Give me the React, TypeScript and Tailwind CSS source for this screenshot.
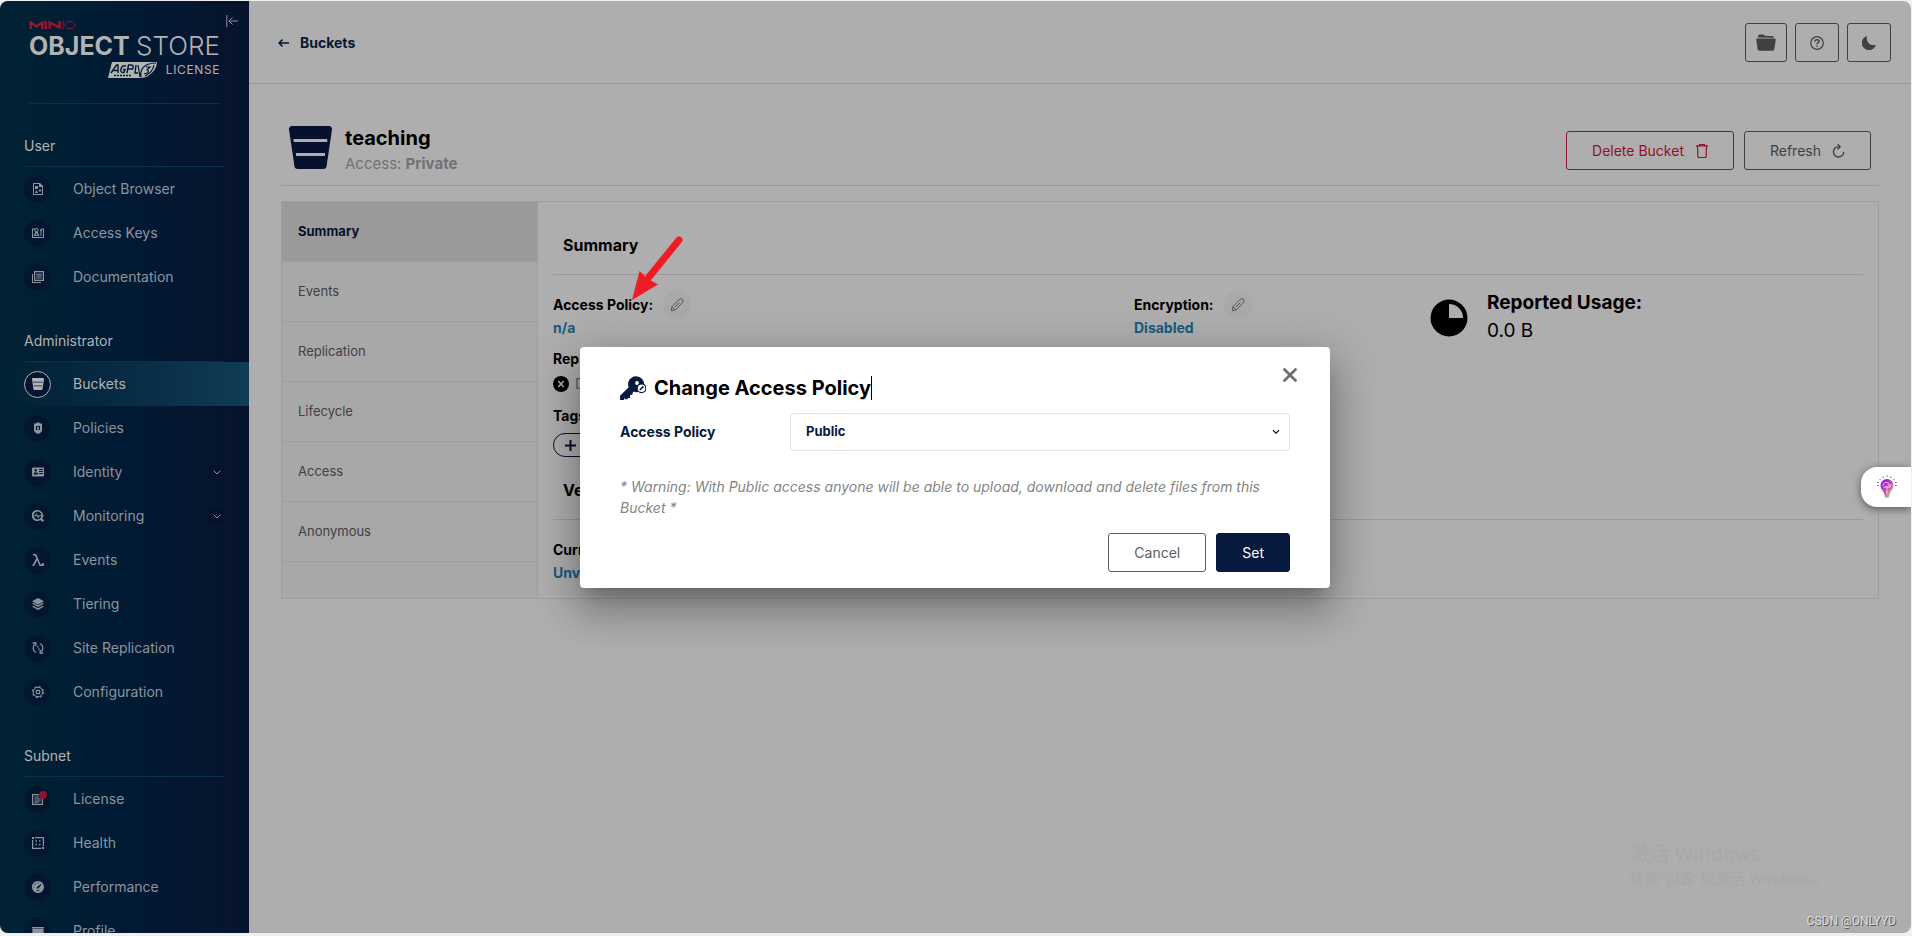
import { useState } from 'react';
import type { ReactNode } from 'react';

interface NavItem {
  label: string;
  icon: ReactNode;
  expandable?: boolean;
  badge?: boolean;
}

interface NavGroup {
  title: string;
  items: NavItem[];
}

function Glyph({ children }: { children: ReactNode }) {
  return (
    <svg viewBox="0 0 12 12" className="h-3 w-3" fill="currentColor" aria-hidden="true">
      {children}
    </svg>
  );
}

function BucketShape({ className }: { className: string }) {
  return (
    <svg viewBox="0 0 43 43" className={className} fill="currentColor" aria-hidden="true">
      <path
        fillRule="evenodd"
        d="M3 0h37a3 3 0 0 1 3 3.4L37.6 40a3.4 3.4 0 0 1-3.3 3H8.700a3.400 3.400 0 0 1-3.300-3L0 3.400A3 3 0 0 1 3 0ZM4.600 13v3h33.600v-3ZM7 27v3h29v-3Z"
      />
    </svg>
  );
}

const navGroups: NavGroup[] = [
  {
    title: 'User',
    items: [
      {
        label: 'Object Browser',
        icon: (
          <Glyph>
            <path fillRule="evenodd" d="M1 0h7l3 3v9H1ZM2 1v10h8V4H7V1Z" />
            <path d="M3 3h3v3H3ZM8 6l1.500 1.500L8 9 6.500 7.500ZM4.500 7 6 10H3Z" />
          </Glyph>
        ),
      },
      {
        label: 'Access Keys',
        icon: (
          <Glyph>
            <path fillRule="evenodd" d="M0 1.500h3v1H1V10h10V2.500H9v-1h3V11H0Z" />
            <path fillRule="evenodd" d="M4.500 1a2.200 2.200 0 0 1 1.200 4L7.500 9h-6l1.800-4a2.200 2.200 0 0 1 1.200-4Zm0 1a1.100 1.100 0 1 0 .1 0ZM4.500 6 3.300 8.200h2.400Z" />
            <path d="M8 2.500h2v2H8ZM8 5.500h2v1H8ZM8 7.500h2v1H8Z" />
          </Glyph>
        ),
      },
      {
        label: 'Documentation',
        icon: (
          <Glyph>
            <path fillRule="evenodd" d="M2 0h10v10H2ZM3.200 1.200v7.600h7.600V1.200Z" />
            <path d="M0 3h1v8h8v1H0ZM4.200 2.700h5.600v1H4.200ZM4.200 4.600h5.600v1H4.200ZM4.200 6.500h5.600v1H4.200Z" />
          </Glyph>
        ),
      },
    ],
  },
  {
    title: 'Administrator',
    items: [
      { label: 'Buckets', icon: <BucketShape className="h-3 w-3" /> },
      {
        label: 'Policies',
        icon: (
          <Glyph>
            <path fillRule="evenodd" d="M4 1.500 6 0l2 1.500h2V8c0 2-2 3.200-4 4-2-.8-4-2-4-4V1.500ZM4 4v4h4V4ZM5.500 4.600h1v1H7v1.800H5V5.600h.5Z" />
          </Glyph>
        ),
      },
      {
        label: 'Identity',
        expandable: true,
        icon: (
          <Glyph>
            <path fillRule="evenodd" d="M1 1.500h10a1 1 0 0 1 1 1v7a1 1 0 0 1-1 1H1a1 1 0 0 1-1-1v-7a1 1 0 0 1 1-1ZM7 3v1h4V3ZM7 5v1h4V5ZM7 7v1h4V7ZM3.700 3a1.300 1.300 0 1 0 .1 0ZM1.500 8.500h4.500C6 7 5 6.300 3.700 6.300S1.500 7 1.500 8.500Z" />
          </Glyph>
        ),
      },
      {
        label: 'Monitoring',
        expandable: true,
        icon: (
          <Glyph>
            <path fillRule="evenodd" d="M5.500 0a5.500 5.500 0 0 1 4.700 8.300L12 10.400 10.500 12 8.300 10A5.500 5.500 0 1 1 5.500 0Zm0 1.600a3.900 3.900 0 1 0 .1 0Z" />
            <path d="M2 5.200h1.400L4.500 3l1.600 3.400.7-1.200H12v1H7.500L6 8.500 4.500 5.200 4 6.200H2Z" />
          </Glyph>
        ),
      },
      {
        label: 'Events',
        icon: (
          <Glyph>
            <path d="M1 0h3.200l4.300 10.300H10V9h1.800v3H7.600L5.200 6.200 2 12H0l4.300-7.600L3 1.600H1Z" />
          </Glyph>
        ),
      },
      {
        label: 'Tiering',
        icon: (
          <Glyph>
            <path d="m6 0 6 3.200-6 3.200L0 3.200Z" />
            <path d="m0 5.600 1.400-.8L6 7.300l4.600-2.500 1.400.8L6 8.900ZM0 8.500l1.400-.8L6 10.200l4.600-2.500 1.400.8L6 11.900Z" />
          </Glyph>
        ),
      },
      {
        label: 'Site Replication',
        icon: (
          <Glyph>
            <g fill="none" stroke="currentColor" strokeWidth="1.300">
              <path d="M4 10.500A5 5 0 0 1 2.600 2.500M8 1.500a5 5 0 0 1 1.400 8" />
              <path d="M.8 1h3v3M11.200 11h-3V8" />
            </g>
            <path d="M5 4.300h1.600v1.300H5ZM6 6.400h1.600v1.300H6Z" />
          </Glyph>
        ),
      },
      {
        label: 'Configuration',
        icon: (
          <Glyph>
            <g fill="none" stroke="currentColor">
              <circle cx="6" cy="6" r="4.700" strokeWidth="1" />
              <circle cx="6" cy="6" r="5.400" strokeWidth="1.200" strokeDasharray="2.120" />
              <rect x="4.300" y="4.300" width="3.400" height="3.400" rx="0.800" strokeWidth="1.200" />
            </g>
          </Glyph>
        ),
      },
    ],
  },
  {
    title: 'Subnet',
    items: [
      {
        label: 'License',
        badge: true,
        icon: (
          <Glyph>
            <path fillRule="evenodd" d="M0 1h7v1.200H1.200v8.600h8.600V5H11v7H0Z" />
            <path d="M2.300 3.500h4.500v1H2.300ZM2.300 5.500h6.400v1H2.300ZM2.300 7.500h6.400v1H2.300ZM2.300 9.200h4.500v.8H2.300Z" />
          </Glyph>
        ),
      },
      {
        label: 'Health',
        icon: (
          <Glyph>
            <path d="M0 0h2v2H0ZM3 0h9v9h-1.200V1.200H3ZM0 3h1.200v7.800H9V12H0ZM10 10h2v2h-2ZM3.500 3.300H5v1.500H3.500ZM7 3.300h1.500v1.500H7ZM3.500 6.800H5v1.500H3.500ZM7 6.800h1.500v1.500H7Z" />
          </Glyph>
        ),
      },
      {
        label: 'Performance',
        icon: (
          <Glyph>
            <path fillRule="evenodd" d="M6 0a6 6 0 1 1-.1 0ZM3 2.500l-.7.800.7.700.8-.7ZM5.600 1.300v1.100h.9V1.300ZM8.800 3 5.700 5.500a1.100 1.100 0 1 0 1.300 1.300L9.400 3.600ZM1.400 5.700v.9h1v-.9ZM4.400 9.300v.8h3.200v-.8Z" />
          </Glyph>
        ),
      },
      {
        label: 'Profile',
        icon: (
          <Glyph>
            <path d="M0 2h12v1.500H0ZM.4 4h11.200v5a1 1 0 0 1-1 1H1.400a1 1 0 0 1-1-1Z" />
          </Glyph>
        ),
      },
    ],
  },
];

const tabs = ['Summary', 'Events', 'Replication', 'Lifecycle', 'Access', 'Anonymous'];

function Logo() {
  return (
    <div className="flex h-[103px] flex-col px-[29px] pt-5 text-[#b1b3b4]">
      <div className="text-[#9c1430]">
        <svg viewBox="0 0 46 8" className="h-2 w-[47px]" fill="none" stroke="currentColor" role="img" aria-label="MinIO">
          <path strokeWidth="2.400" d="M1.200 8V1.500L7 5.500l5.800-4V8M16.200 0v8M20.200 8V1.500L30 6.500V0" />
          <path strokeWidth="1" d="M33.500 0v8" />
          <ellipse cx="40.500" cy="4" rx="5" ry="3.500" strokeWidth="1" />
        </svg>
      </div>
      <div className="mt-[3px] flex items-baseline justify-between whitespace-nowrap leading-7">
        <span className="text-[25px] font-bold">OBJECT</span>
        <span className="text-[26px] font-light">STORE</span>
      </div>
      <div className="mt-[2px] flex items-center justify-end gap-2">
        <svg viewBox="0 0 50 16" className="h-4 w-[50px]" role="img" aria-label="AGPLv3">
          <path fill="#b1b3b4" d="M4 0h45q0 8-9 14-3 2-8 2H0Z" />
          <g fill="none" stroke="#02182f" strokeWidth="1.400">
            <path d="M3 11 8.500 3H10v8M5 8.500h5M18 4q-4-1-5 3-1 4 3 3.500l1-3h-2M19 11l1.500-8h3q3 1 1 4h-4M28 3l-1 8h3" />
            <path d="M30 3l2 12M48 1q-10 0-14 6-2 4-1 8M38 5h4l-3 3q3 1 0 3l-3 1M46 3q-1 7-9 11" strokeWidth="1.200" />
            <path d="M6 13.500h18" strokeDasharray="2 1" />
          </g>
        </svg>
        <span className="text-xs leading-4 tracking-wider">LICENSE</span>
      </div>
      <div className="mt-auto h-px bg-[#082f4c]" />
    </div>
  );
}

function NavRow({ item, active, onSelect }: { item: NavItem; active: boolean; onSelect: () => void }) {
  return (
    <li>
      <button
        type="button"
        onClick={onSelect}
        className={`flex h-11 w-full items-center pr-[25px] pl-6 text-left text-sm ${
          active ? 'bg-linear-to-r from-[#00253700] to-[#0e3d55] text-[#b1b3b4]' : 'text-[#8b959e]'
        }`}
      >
        <span
          className={`relative flex h-[27px] w-[27px] items-center justify-center rounded-full border bg-[#03152f] ${
            active ? 'border-[#b1b3b4]' : 'border-[#04182f]'
          }`}
        >
          {item.icon}
          {item.badge && <span className="absolute top-1 right-[3px] h-2 w-2 rounded-full bg-[#8e132c]" />}
        </span>
        <span className="ml-[22px] flex-1">{item.label}</span>
        {item.expandable && (
          <span className="flex h-[15px] w-[15px] items-center justify-center rounded-xs bg-[#04122a]">
            <svg viewBox="0 0 8 5" className="h-[5px] w-2" fill="none" stroke="currentColor" aria-hidden="true">
              <path d="m.5.5 3.500 3.500L7.500.5" />
            </svg>
          </span>
        )}
      </button>
    </li>
  );
}

function Sidebar() {
  const [current, setCurrent] = useState('Buckets');

  return (
    <nav className="relative w-[249px] shrink-0 overflow-hidden bg-linear-to-r from-[#002233] via-[#011a34] to-[#07132c]">
      <Logo />
      <button type="button" aria-label="Collapse menu" className="absolute top-[13px] right-[11px] text-[#8b959e]">
        <svg viewBox="0 0 12 14" className="h-[14px] w-3" fill="none" stroke="currentColor" aria-hidden="true">
          <path d="M.8 1v12M12 7H3M6.500 3.500 3 7l3.500 3.500" />
        </svg>
      </button>
      {navGroups.map((group) => (
        <section key={group.title}>
          <h2 className="mr-[25px] ml-6 border-b border-[#082f4c] pt-8 pb-[10px] text-sm text-[#b1b3b4]">
            {group.title}
          </h2>
          <ul>
            {group.items.map((item) => (
              <NavRow
                key={item.label}
                item={item}
                active={item.label === current}
                onSelect={() => setCurrent(item.label)}
              />
            ))}
          </ul>
        </section>
      ))}
    </nav>
  );
}

function EditButton({ label }: { label: string }) {
  return (
    <button
      type="button"
      aria-label={label}
      className="flex h-7 w-7 items-center justify-center rounded-full bg-[#a9a9a9] text-[#555555]"
    >
      <svg viewBox="0 0 14 14" className="h-[14px] w-[14px]" fill="none" stroke="currentColor" aria-hidden="true">
        <path d="M1.300 12.700 2 8.700 9.200 1.500a2.200 2.200 0 0 1 3.200 3.200L5.200 12ZM2 8.700 5.200 12M5 9l4.500-4.500" strokeLinejoin="round" />
      </svg>
    </button>
  );
}

function TopBar() {
  const boxed = 'flex h-[39px] items-center justify-center rounded-[3px] border border-[#3f4040] text-[#3f4040]';

  return (
    <header className="flex h-[83px] items-start justify-between border-b border-[#9b9b9b] pr-5 pl-[29px]">
      <a href="#buckets" className="mt-8 flex items-center gap-[11px] text-sm font-bold text-[#051731]">
        <svg viewBox="0 0 11 8" className="h-2 w-[11px]" fill="none" stroke="currentColor" strokeWidth="1.500" aria-hidden="true">
          <path d="M11 4H1.500M4.500.6 1 4l3.500 3.400" />
        </svg>
        Buckets
      </a>
      <div className="mt-[22px] flex gap-2">
        <button type="button" aria-label="Object manager" className={`${boxed} w-[42px]`}>
          <svg viewBox="0 0 20 17" className="h-[17px] w-5" fill="currentColor" aria-hidden="true">
            <path d="M2 3.500V2a1.500 1.500 0 0 1 1.500-1.500h4L9.500 2H16a2 2 0 0 1 2 1.700ZM1.500 4.500h17a1.200 1.200 0 0 1 1.200 1.400L18.400 15a2 2 0 0 1-2 1.700H3.600a2 2 0 0 1-2-1.700L.3 5.900a1.200 1.200 0 0 1 1.200-1.400Z" />
          </svg>
        </button>
        <button type="button" aria-label="Help" className={`${boxed} w-11`}>
          <svg viewBox="0 0 14 14" className="h-[14px] w-[14px]" fill="none" stroke="currentColor" aria-hidden="true">
            <circle cx="7" cy="7" r="6.300" strokeWidth="1.200" />
            <path d="M5 5.600c0-2.500 4-2.300 4-.2C9 6.800 7 6.700 7 8.300M7 9.400v1.300" strokeWidth="1.500" />
          </svg>
        </button>
        <button type="button" aria-label="Dark mode" className={`${boxed} w-11`}>
          <svg viewBox="0 0 14 14" className="h-[14px] w-[14px]" fill="currentColor" aria-hidden="true">
            <path d="M5.200 0A7.200 7.200 0 1 0 14 8.800 6.900 6.900 0 0 1 5.200 0Z" />
          </svg>
        </button>
      </div>
    </header>
  );
}

function BucketHeader() {
  return (
    <div className="flex h-[102px] items-start justify-between border-b border-[#9b9b9b] px-2">
      <div className="mt-[42px] flex gap-[13px]">
        <BucketShape className="h-[43px] w-[43px] text-[#05112d]" />
        <div>
          <h1 className="text-xl leading-6 font-bold text-black">teaching</h1>
          <p className="text-[15px] leading-7 text-[#707276]">
            Access: <b>Private</b>
          </p>
        </div>
      </div>
      <div className="mt-[47px] flex gap-[10px] text-sm">
        <button
          type="button"
          className="flex h-[39px] items-center gap-3 rounded-[3px] border border-[#93102c] px-[25px] text-[#93102c]"
        >
          Delete Bucket
          <svg viewBox="0 0 12 14" className="h-[14px] w-3" fill="none" stroke="currentColor" aria-hidden="true">
            <path d="M0 1.800h12M3.500 1.500V.5h5v1M1.500 2l.4 10.500a1 1 0 0 0 1 1h6.200a1 1 0 0 0 1-1L10.500 2" strokeWidth="1.200" />
          </svg>
        </button>
        <button
          type="button"
          className="flex h-[39px] items-center gap-[11px] rounded-[3px] border border-[#3f4040] px-[25px] text-[#3f4040]"
        >
          Refresh
          <svg viewBox="0 0 13 14" className="h-[14px] w-[13px]" fill="none" stroke="currentColor" strokeWidth="1.400" aria-hidden="true">
            <path d="M6.500 2.600A5.200 5.200 0 1 0 11.800 8M5.500.3l2.700 2.400L5.500 5.300" />
          </svg>
        </button>
      </div>
    </div>
  );
}

function Field({ label, children, editable }: { label: string; children: ReactNode; editable?: boolean }) {
  return (
    <div>
      <div className="flex h-7 items-center gap-[10px] text-sm font-bold text-black">
        {label}
        {editable && <EditButton label={`Edit ${label}`} />}
      </div>
      <div className="text-sm leading-[18px] font-bold text-[#175b80]">{children}</div>
    </div>
  );
}

function SectionTitle({ children }: { children: ReactNode }) {
  return <h2 className="border-b border-[#9b9b9b] pb-[17px] pl-[10px] text-base font-bold text-black">{children}</h2>;
}

function SummaryPanel() {
  return (
    <div className="flex-1 px-[15px] pt-[31px]">
      <SectionTitle>Summary</SectionTitle>
      <div className="grid grid-cols-[581fr_296fr_433fr] pt-4">
        <div>
          <Field label="Access Policy:" editable>
            n/a
          </Field>
          <div className="mt-2">
            <Field label="Replication:">
              <span className="flex h-[22px] items-center gap-[6px] font-normal text-[#5e6064]">
                <svg viewBox="0 0 16 16" className="h-4 w-4" aria-hidden="true">
                  <circle cx="8" cy="8" r="8" fill="#000000" />
                  <path d="m5.300 5 5.400 6M10.700 5l-5.400 6" stroke="#aeaeae" strokeWidth="1.600" />
                </svg>
                Disabled
              </span>
            </Field>
          </div>
          <div className="mt-[7px] text-sm leading-7 font-bold text-black">Tags:</div>
          <button
            type="button"
            className="mt-[3px] flex h-6 items-center gap-2 rounded-full border border-[#05112d] px-[11px] text-xs text-[#05112d]"
          >
            <svg viewBox="0 0 11 11" className="h-[11px] w-[11px]" stroke="currentColor" strokeWidth="2" aria-hidden="true">
              <path d="M5.500 0v11M0 5.500h11" />
            </svg>
            Add tag
          </button>
        </div>
        <Field label="Encryption:" editable>
          Disabled
        </Field>
        <div className="flex gap-[19px]">
          <svg viewBox="0 0 38 38" className="mt-2 h-[38px] w-[38px]" aria-hidden="true">
            <circle cx="19" cy="19" r="18.500" fill="#000000" />
            <path d="M19 19V5a14 14 0 0 1 14 14Z" fill="#aeaeae" />
          </svg>
          <div className="text-[19px] text-black">
            <div className="leading-6 font-bold">Reported Usage:</div>
            <div className="leading-8">0.0 B</div>
          </div>
        </div>
      </div>
      <div className="pt-[21px]">
        <SectionTitle>Versioning</SectionTitle>
      </div>
      <div className="py-4">
        <Field label="Current Status:">Unversioned</Field>
      </div>
    </div>
  );
}

function BucketTabs() {
  const [tab, setTab] = useState('Summary');

  return (
    <div className="flex w-64 shrink-0 flex-col border-r border-[#9f9f9f] bg-[#a8a8a8]">
      {tabs.map((name) => (
        <button
          key={name}
          type="button"
          onClick={() => setTab(name)}
          className={`h-[60px] border-b border-[#9f9f9f] px-4 text-left text-[13px] ${
            name === tab ? 'bg-[#9a9a9a] font-bold text-[#05112d]' : 'text-[#404142]'
          }`}
        >
          {name}
        </button>
      ))}
    </div>
  );
}

function PolicyDialog() {
  const [policy, setPolicy] = useState('Public');

  return (
    <div className="absolute inset-0 flex items-center justify-center pt-px pr-px">
      <div
        role="dialog"
        aria-labelledby="dialog-title"
        className="relative w-[750px] rounded-[4px] bg-white px-10 pt-[27px] pb-4 shadow-[0_11px_15px_-7px_rgba(0,0,0,0.2),0_24px_38px_3px_rgba(0,0,0,0.2),0_9px_46px_8px_rgba(0,0,0,0.15)]"
      >
        <button type="button" aria-label="Close" className="absolute top-[21px] right-[33px] text-[#6f6f6f]">
          <svg viewBox="0 0 14 14" className="h-[14px] w-[14px]" stroke="currentColor" strokeWidth="2.800" strokeLinecap="round" aria-hidden="true">
            <path d="m1.500 1.500 11 11M12.500 1.500l-11 11" />
          </svg>
        </button>
        <h2 id="dialog-title" className="flex h-7 items-center text-xl font-bold text-black">
          <svg viewBox="0 0 26 24" className="mr-2 h-6 w-[26px]" aria-hidden="true">
            <path
              fill="#07193e"
              d="M16 .2a8 8 0 0 1 8 8.800q-5-.5-6 4l-.2 3q-2 .4-4-.4l-1.300 1.400v1.700h-1.700l-.8.900V22H8l-.7 1.200H5V21l-1 3H0v-4.200L8.700 11.300A8 8 0 0 1 16 .2Z"
            />
            <circle cx="17" cy="7" r="1.900" fill="#ffffff" />
            <circle cx="21.500" cy="12.300" r="4.400" fill="#ffffff" stroke="#07193e" strokeWidth="1.200" />
            <path d="m19.800 14 3.600-3.600" stroke="#07193e" strokeWidth="1.600" />
          </svg>
          Change Access Policy
          <span className="h-6 w-px bg-black" />
        </h2>
        <div className="mt-[11px] flex items-center">
          <label htmlFor="policy" className="w-[170px] text-sm font-bold text-[#07193e]">
            Access Policy
          </label>
          <div className="relative flex-1">
            <select
              id="policy"
              value={policy}
              onChange={(e) => setPolicy(e.target.value)}
              className="block h-[38px] w-full appearance-none rounded-[3px] border border-[#e2e2e2] bg-white px-[15px] text-[13px] font-bold text-[#07193e]"
            >
              <option>Private</option>
              <option>Public</option>
              <option>Custom</option>
            </select>
            <svg
              viewBox="0 0 8 6"
              className="pointer-events-none absolute top-4 right-[10px] h-[6px] w-2"
              fill="none"
              stroke="#07193e"
              strokeWidth="1.300"
              aria-hidden="true"
            >
              <path d="m1 1.200 3 3 3-3" />
            </svg>
          </div>
        </div>
        <p className="mt-[25px] text-sm leading-[21px] text-[#858585] italic">
          * Warning: With Public access anyone will be able to upload, download and delete files from this Bucket *
        </p>
        <div className="mt-[15px] flex justify-end gap-[10px] text-sm">
          <button type="button" className="h-[39px] rounded-[3px] border border-[#5e5e5e] px-[25px] text-[#5e5e5e]">
            Cancel
          </button>
          <button type="button" className="h-[39px] rounded-[3px] border border-[#07193e] bg-[#07193e] px-[25px] text-white">
            Set
          </button>
        </div>
      </div>
    </div>
  );
}

function PointerArrow() {
  return (
    <svg viewBox="0 0 52 66" className="pointer-events-none absolute top-[234px] left-[631px] h-[66px] w-[52px]" aria-hidden="true">
      <path d="M48 5 18 42" stroke="#ee1c24" strokeWidth="7" strokeLinecap="round" />
      <path d="M1 65 8.500 36l8 7.500 10.500 6Z" fill="#ee1c24" />
    </svg>
  );
}

function AssistantTab() {
  return (
    <button
      type="button"
      aria-label="Assistant"
      className="absolute top-[466px] right-0 flex h-10 w-[50px] items-center justify-center rounded-l-[16px] bg-white pl-[2px] shadow-[0_2px_8px_rgba(0,0,0,0.5)]"
    >
      <svg viewBox="0 0 20 24" className="h-6 w-5" fill="none" aria-hidden="true">
        <defs>
          <linearGradient id="bulb" x1="0" y1="0" x2="0.800" y2="1">
            <stop offset="0.200" stopColor="#a010e8" />
            <stop offset="0.600" stopColor="#c0609a" />
            <stop offset="1" stopColor="#ecc9a0" />
          </linearGradient>
        </defs>
        <path d="M10 4a6.500 6.500 0 0 1 6.500 6.500c0 3-2.500 4.500-3.500 8L12 22q-2 2-4 0l-1-3.500c-1-3.500-3.500-5-3.500-8A6.500 6.500 0 0 1 10 4Z" fill="url(#bulb)" />
        <path d="M10 19v-8M6 11q0-4 3.500-3.500T12 10t3-.5M6.500 12q2 1 3.500-.5M10 12q3 1 4-1" stroke="#f0d0f4" strokeWidth="0.900" />
        <path d="M10 .5V2M6 1.500l.5 1.400M14 1.500l-.5 1.400M2.500 4l1 1M17.500 4l-1 1M.3 7.500H2M19.700 7.500H18M.3 10.500H2M19.700 10.500H18" stroke="#a83cc8" strokeWidth="1" />
      </svg>
    </button>
  );
}

export default function App() {
  return (
    <div className="h-screen overflow-hidden bg-[#efefef] pt-px pr-px pb-[3px] font-['Inter',sans-serif]">
      <div className="relative flex h-full overflow-hidden rounded-lg bg-[#aeaeae]">
        <Sidebar />
        <main className="min-w-0 flex-1">
          <TopBar />
          <div className="px-8">
            <BucketHeader />
            <div className="mt-[15px] flex border border-[#9f9f9f]">
              <BucketTabs />
              <SummaryPanel />
            </div>
          </div>
        </main>

        {/* Desktop activation notice */}
        <div className="absolute right-[83px] bottom-[45px] font-['Open_Sans','Noto_Sans_CJK_SC',sans-serif] text-[#a8a8a8]">
          <div className="text-xl leading-7">激活 Windows</div>
          <div className="text-[15px] leading-5">转到“设置”以激活 Windows。</div>
        </div>

        <PolicyDialog />
        <PointerArrow />
        <AssistantTab />
        <div className="absolute right-[15px] bottom-1 font-['Roboto',sans-serif] text-xs leading-4 text-[#dedede] [text-shadow:1px_1px_0_#555555]">
          CSDN @ONLYYD
        </div>
      </div>
    </div>
  );
}
